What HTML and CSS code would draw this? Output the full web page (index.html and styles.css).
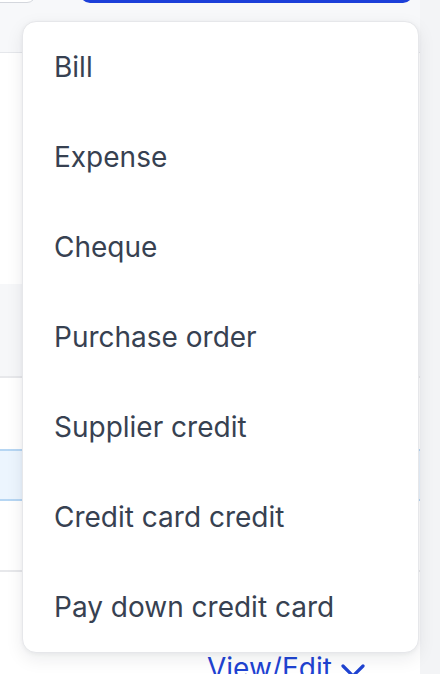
FILE: index.html
```html
<!DOCTYPE html>
<html lang="en">
<head>
<meta charset="utf-8">
<title>New transaction menu</title>
<link rel="stylesheet" href="styles.css">
</head>
<body>
<div class="page">
  <div class="main">
    <div class="toolbar">
      <div class="btn-outline"></div>
      <div class="btn-primary"></div>
    </div>
    <div class="spacer"></div>
    <div class="thead"></div>
    <div class="row row-a"></div>
    <div class="row row-selected"></div>
    <div class="row row-b"></div>
    <div class="row row-last">
      <a class="view-edit" href="#">View/Edit
        <svg class="chev" viewBox="0 0 24 14" width="24" height="14" aria-hidden="true">
          <polyline points="2,2 12,12 22,2" fill="none" stroke="currentColor" stroke-width="3.2" stroke-linecap="round" stroke-linejoin="round"/>
        </svg>
      </a>
    </div>
  </div>
  <div class="gutter"></div>
  <ul class="menu">
    <li class="item">Bill</li>
    <li class="item">Expense</li>
    <li class="item">Cheque</li>
    <li class="item">Purchase order</li>
    <li class="item">Supplier credit</li>
    <li class="item">Credit card credit</li>
    <li class="item">Pay down credit card</li>
  </ul>
</div>
</body>
</html>
```

FILE: styles.css
```css
* { box-sizing: border-box; }
html, body {
  margin: 0;
  padding: 0;
}
body {
  width: 440px;
  height: 674px;
  overflow: hidden;
  font-family: Inter, "Noto Sans", "Liberation Sans", sans-serif;
  background: #ffffff;
}
.page {
  position: relative;
  display: flex;
  width: 440px;
  height: 674px;
  overflow: hidden;
}
.main {
  width: 420px;
  display: flex;
  flex-direction: column;
}
.gutter {
  width: 20px;
  background: #f3f4f6;
}
.toolbar {
  height: 53px;
  flex: none;
  display: flex;
  align-items: flex-start;
  background: #f7f8fa;
  border-bottom: 1px solid #e5e7eb;
}
.btn-outline {
  width: 46px;
  height: 40px;
  margin-top: -37px;
  margin-left: -10px;
  background: #ffffff;
  border: 1px solid #d4d7dd;
  border-radius: 9px;
}
.btn-primary {
  width: 333px;
  height: 40px;
  margin-top: -37px;
  margin-left: 44px;
  background: #1c3fd9;
  border-radius: 10px;
}
.spacer {
  height: 231px;
  flex: none;
}
.thead {
  height: 94px;
  flex: none;
  background: #f6f7f9;
  border-bottom: 2px solid #e7e8eb;
}
.row {
  flex: none;
}
.row-a {
  height: 71px;
}
.row-selected {
  height: 52px;
  background: #ecf5fe;
  border-top: 2px solid #b6d6f3;
  border-bottom: 2px solid #b6d6f3;
}
.row-b {
  height: 71px;
  border-bottom: 2px solid #e7e8eb;
}
.row-last {
  flex: 1;
  padding-top: 79px;
  padding-left: 207px;
}
.view-edit {
  display: inline-flex;
  align-items: center;
  gap: 9px;
  color: #1f43d2;
  text-decoration: none;
  font-size: 28px;
  line-height: 34px;
  white-space: nowrap;
}
.chev {
  margin-top: 6px;
}
.menu {
  position: absolute;
  left: 22px;
  top: 21px;
  width: 397px;
  margin: 0;
  padding: 0;
  list-style: none;
  background: #ffffff;
  border: 1px solid #e6e7ea;
  border-radius: 14px;
  box-shadow: 0 6px 18px rgba(17, 24, 39, 0.08), 0 1px 4px rgba(17, 24, 39, 0.05);
}
.item {
  height: 90px;
  line-height: 90px;
  padding-left: 31px;
  font-size: 28px;
  color: #374151;
  white-space: nowrap;
}
```
